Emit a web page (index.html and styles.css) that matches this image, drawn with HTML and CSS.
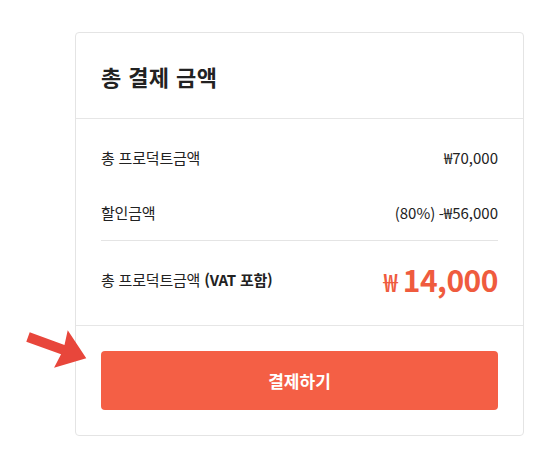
FILE: index.html
```html
<!DOCTYPE html>
<html lang="ko">
<head>
<meta charset="utf-8">
<link rel="stylesheet" href="styles.css">
</head>
<body>
<div class="stage">
  <svg class="pointer" width="80" height="60" viewBox="0 0 80 60" aria-hidden="true">
    <polygon transform="translate(8,17) rotate(20)" points="0,-5 37,-5 35,-20 62,0 35,20 37,5 0,5" fill="#e8463b"/>
  </svg>
  <div class="card">
    <div class="card-head">
      <h2 class="title">총 결제 금액</h2>
    </div>
    <div class="card-body">
      <div class="row">
        <span class="label">총 프로덕트금액</span>
        <span class="value">₩70,000</span>
      </div>
      <div class="row">
        <span class="label">할인금액</span>
        <span class="value">(80%) -₩56,000</span>
      </div>
      <div class="row total">
        <span class="label">총 프로덕트금액 <b>(VAT 포함)</b></span>
        <span class="total-value"><span class="won">₩</span><span class="amount">14,000</span></span>
      </div>
    </div>
    <div class="card-foot">
      <button class="pay">결제하기</button>
    </div>
  </div>
</div>
</body>
</html>
```

FILE: styles.css
```css
html, body {
  margin: 0;
  padding: 0;
  background: #fff;
}
body {
  font-family: "Noto Sans CJK KR", "Noto Sans", sans-serif;
  color: #222;
}
.stage {
  position: relative;
  padding: 32px 0 0 75px;
}
.pointer {
  position: absolute;
  left: 20px;
  top: 320px;
}
.card {
  width: 447px;
  height: 402px;
  border: 1px solid #e4e4e4;
  border-radius: 4px;
  display: flex;
  flex-direction: column;
}
.card-head {
  height: 85px;
  border-bottom: 1px solid #e6e6e6;
  display: flex;
  align-items: center;
  padding: 0 25px;
}
.title {
  margin: 0;
  font-size: 22px;
  font-weight: 700;
  letter-spacing: 0.4px;
  color: #222;
}
.card-body {
  padding: 11px 25px 0;
  height: 195px;
  border-bottom: 1px solid #e6e6e6;
}
.row {
  height: 55px;
  display: flex;
  align-items: center;
  justify-content: space-between;
  font-size: 15px;
}
.label {
  letter-spacing: -0.2px;
}
.label b {
  font-weight: 700;
}
.value {
  font-size: 15px;
  letter-spacing: 0;
}
.row.total {
  height: 76px;
  border-top: 1px solid #e4e4e4;
}
.total-value {
  display: flex;
  align-items: baseline;
  color: #ef5b3e;
}
.won {
  font-size: 25px;
  font-weight: 500;
  margin-right: 5px;
}
.amount {
  font-size: 30px;
  font-weight: 700;
  letter-spacing: -0.5px;
}
.card-foot {
  flex: 1;
  padding: 25px 25px 0;
}
.pay {
  width: 100%;
  height: 59px;
  border: none;
  border-radius: 4px;
  background: #f45f45;
  color: #fff;
  font-family: inherit;
  font-size: 17px;
  font-weight: 700;
  cursor: pointer;
}
```
